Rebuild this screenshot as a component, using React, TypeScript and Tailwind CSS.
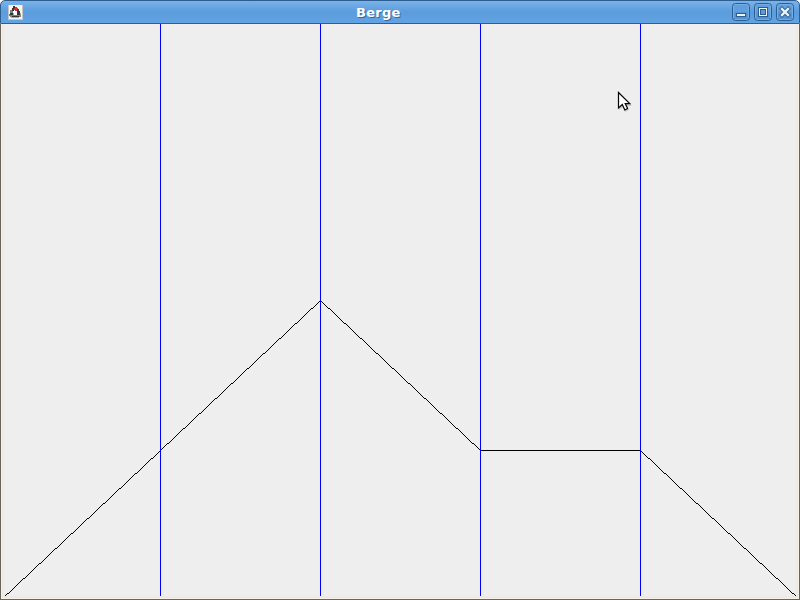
type Point = [number, number];

const gridLines = [160, 320, 480, 640];
const ridge: Point[] = [
  [0, 600],
  [160, 450],
  [320, 300],
  [480, 450],
  [640, 450],
  [800, 600],
];

// One pixel per column, so slopes stay thin and unsmoothed.
function rasterLine([x0, y0]: Point, [x1, y1]: Point) {
  let d = "";
  for (let x = x0; x <= x1; x++) {
    const y = Math.round(y0 + ((y1 - y0) * (x - x0)) / (x1 - x0));
    d += `M${x} ${y}h1v1h-1z`;
  }
  return d;
}

function JavaIcon() {
  return (
    <svg className="ml-[7px] h-4 w-4 shrink-0" viewBox="8 4 16 16" shapeRendering="crispEdges">
      <path fill="#c4c6c5" d="M8 5h15v15H8z" />
      <path fill="#f4f4f0" d="M9 5h13v14H9z" />
      <path fill="#7b8182" d="M10 10h3v4h-3zM9 14h2v2H9zM10 15h11v2H10z" />
      <path fill="#33383a" d="M13 6h2v2h-2zM12 8h2v3h-2zM17 9h2v2h1v4h-3zM10 13h3v2h-3zM12 16h7v1h-7z" />
      <path fill="#ffffff" d="M13 11h4v4h-4z" />
      <path fill="#a4a9aa" d="M13 13h1v2h-1zM20 13h1v2h-1zM11 17h8v1h-8z" />
      <path fill="#d72c2c" d="M15 7h2v1h1v2h-1v1h-2v-1h-1V8h1z" />
    </svg>
  );
}

function WindowButton({ kind }: { kind: "minimize" | "maximize" | "close" }) {
  return (
    <button className="block h-[18px] w-[18px]" aria-label={kind}>
      <svg className="block h-[18px] w-[18px]" viewBox="0 0 18 18">
        <rect x="1.5" y="1.5" width="15" height="15" rx="2" fill="#609fdc" stroke="#75aee5" />
        <rect x="2" y="9" width="14" height="7" fill="#5294d6" />
        <rect x="0.5" y="0.5" width="17" height="17" rx="3" fill="none" stroke="#2e5d8f" />
        {kind === "minimize" && (
          <rect x="4.5" y="10.5" width="9" height="3" fill="#eef3f8" stroke="#2e5d8f" />
        )}
        {kind === "maximize" && (
          <g shapeRendering="crispEdges">
            <path fill="#2e5d8f" d="M4 4h10v10H4z" />
            <path fill="#eef3f8" d="M5 5h8v8H5z" />
            <path fill="#2e5d8f" d="M6 6h6v6H6z" />
            <path fill="#5c9bd9" d="M7 7h4v4H7z" />
          </g>
        )}
        {kind === "close" && (
          <g fill="none" strokeLinecap="square">
            <path stroke="#2e5d8f" strokeWidth="4.2" d="M6 6l6 6M12 6l-6 6" />
            <path stroke="#eef3f8" strokeWidth="2.4" d="M6 6l6 6M12 6l-6 6" />
          </g>
        )}
      </svg>
    </button>
  );
}

export default function App() {
  return (
    <div className="relative flex h-[600px] w-[800px] flex-col overflow-hidden bg-white">
      <header className="grid h-6 shrink-0 grid-cols-[1fr_auto_1fr] items-center rounded-t-[5px] border border-[#2e5d8f] bg-linear-to-b from-[#7ab2ea] via-[#5b9cdc] to-[#61a3e3]">
        <JavaIcon />
        <h1 className="mr-[44px] w-[44px] pt-px text-[13px] leading-[18px] font-bold tracking-[0.25px] whitespace-nowrap text-white [font-family:'DejaVu_Sans',sans-serif] [text-shadow:1px_1px_0_#35669b]">
          Berge
        </h1>
        <div className="mr-[5px] flex justify-end gap-1">
          <WindowButton kind="minimize" />
          <WindowButton kind="maximize" />
          <WindowButton kind="close" />
        </div>
      </header>
      <div className="flex min-h-0 flex-1 border-x border-b border-[#6b645a]">
        <main className="min-w-0 flex-1 border-x border-b border-[#f5f0e8] bg-[#eeeeee]">
          <svg className="block h-[574px] w-[796px]" viewBox="2 24 796 574">
            <path fill="#ede9e3" d="M2 24h2v572h792V24h2v574H2z" />
            <clipPath id="canvas">
              <rect x="5" y="24" width="791" height="572" />
            </clipPath>
            <g clipPath="url(#canvas)" shapeRendering="crispEdges">
              {ridge.slice(1).map((end, i) => (
                <path key={i} d={rasterLine(ridge[i], end)} fill="#000000" />
              ))}
              {gridLines.map((x) => (
                <rect key={x} x={x} y="24" width="1" height="572" fill="#0000ff" />
              ))}
            </g>
          </svg>
        </main>
      </div>
      <svg className="absolute top-[90px] left-[616px] h-6 w-4" viewBox="0 0 16 24">
        <path fill="#00000025" d="M3 3v17l4-3 2 5 4-2-2-4h5z" />
        <path fill="#ffffff" stroke="#000000" strokeWidth="1.2" d="M2.5 2.5v15.5l3.8-3.5 2.5 5.5 2.8-1.4-2.4-5h4.6z" />
      </svg>
    </div>
  );
}
